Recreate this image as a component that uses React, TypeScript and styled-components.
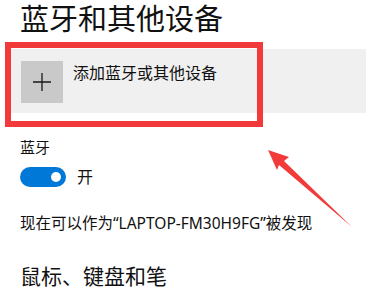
import React from "react";
import styled, { createGlobalStyle } from "styled-components";

const Global = createGlobalStyle`
  html, body { margin: 0; padding: 0; background: #ffffff; }
  body {
    font-family: "Noto Sans", "Noto Sans CJK SC", sans-serif;
    color: #111111;
  }
`;

const Page = styled.div`
  position: relative;
  width: 366px;
  height: 293px;
  overflow: hidden;
  padding-left: 20px;
  box-sizing: border-box;
`;

const Title = styled.h1`
  margin: 0;
  font-size: 29px;
  line-height: 37px;
  font-weight: 400;
  color: #111;
`;

const AddRow = styled.div`
  margin: 12px 0 0 -10px;
  height: 64px;
  box-sizing: border-box;
  padding: 12px 11px;
  background: #f0f0f0;
  display: flex;
  align-items: flex-start;
  gap: 10px;
`;

const PlusTile = styled.div`
  width: 42px;
  height: 42px;
  background: #c9c9c9;
  display: flex;
  align-items: center;
  justify-content: center;
  flex-shrink: 0;
`;

const AddLabel = styled.span`
  font-size: 16px;
  line-height: 22px;
  margin-top: 1px;
  color: #111;
`;

const Label = styled.div<{ $size: number; $lh: number; $mt: number }>`
  font-size: ${(p) => p.$size}px;
  line-height: ${(p) => p.$lh}px;
  margin-top: ${(p) => p.$mt}px;
  color: #111;
`;

const ToggleRow = styled.div`
  display: flex;
  align-items: center;
  gap: 11px;
  margin-top: 10px;
  height: 20px;
`;

const Toggle = styled.div<{ $on: boolean }>`
  width: 46px;
  height: 20px;
  border-radius: 10px;
  background: ${(p) => (p.$on ? "#0078d7" : "#ffffff")};
  display: flex;
  align-items: center;
  justify-content: ${(p) => (p.$on ? "flex-end" : "flex-start")};
  padding: 0 5px;
  box-sizing: border-box;
`;

const Knob = styled.div`
  width: 10px;
  height: 10px;
  border-radius: 50%;
  background: #ffffff;
`;

const ToggleText = styled.span`
  font-size: 16px;
  line-height: 20px;
  color: #111;
`;

const Highlight = styled.div`
  position: absolute;
  left: 5px;
  top: 42px;
  width: 258px;
  height: 85px;
  box-sizing: border-box;
  border: 6px solid #f23a3a;
  pointer-events: none;
`;

const ArrowSvg = styled.svg`
  position: absolute;
  left: 0;
  top: 0;
  pointer-events: none;
`;

export default function App() {
  return (
    <>
      <Global />
      <Page>
        <Title>蓝牙和其他设备</Title>
        <AddRow>
          <PlusTile>
            <svg width="20" height="20" viewBox="0 0 20 20">
              <path d="M10 1 V19 M1 10 H19" stroke="#1a1a1a" strokeWidth="1.3" />
            </svg>
          </PlusTile>
          <AddLabel>添加蓝牙或其他设备</AddLabel>
        </AddRow>
        <Label $size={15} $lh={20} $mt={24}>蓝牙</Label>
        <ToggleRow>
          <Toggle $on>
            <Knob />
          </Toggle>
          <ToggleText>开</ToggleText>
        </ToggleRow>
        <Label $size={15.5} $lh={20} $mt={26}>现在可以作为“LAPTOP-FM30H9FG”被发现</Label>
        <Label $size={21} $lh={28} $mt={29}>鼠标、键盘和笔</Label>
        <Highlight />
        <ArrowSvg width="366" height="293" viewBox="0 0 366 293">
          <polygon
            points="268,150 289,157 284,161 352,227 279,165 277,170"
            fill="#f23a3a"
          />
        </ArrowSvg>
      </Page>
    </>
  );
}
